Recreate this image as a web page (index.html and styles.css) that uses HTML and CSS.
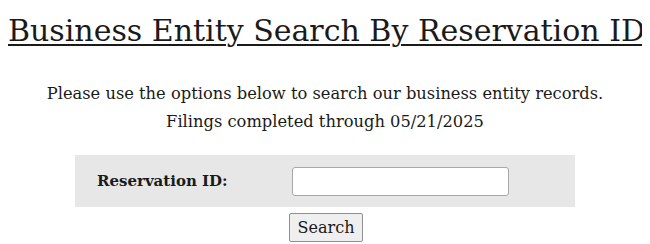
FILE: index.html
```html
<!DOCTYPE html>
<html lang="en">
<head>
<meta charset="utf-8">
<title>Business Entity Search By Reservation ID</title>
<link rel="stylesheet" href="styles.css">
</head>
<body>
<h1 class="title">Business Entity Search By Reservation ID</h1>
<p class="intro">Please use the options below to search our business entity records.<br>Filings completed through 05/21/2025</p>
<form class="search-form">
  <div class="field-row">
    <label class="field-label" for="resid">Reservation ID:</label>
    <input class="field-input" id="resid" type="text">
  </div>
  <div class="actions">
    <button class="search-btn" type="button">Search</button>
  </div>
</form>
</body>
</html>
```

FILE: styles.css
```css
body {
  margin: 8px;
  font-family: "DejaVu Serif", serif;
  color: #1a1a1a;
  background: #fff;
}
.title {
  margin: 3px 0 0;
  font-size: 30px;
  letter-spacing: 0;
  line-height: 40px;
  font-weight: normal;
  white-space: nowrap;
  text-decoration: underline;
  text-decoration-thickness: 2px;
  text-underline-offset: 3px;
}
.intro {
  margin: 29px 0 0;
  font-size: 16.3px;
  line-height: 28px;
  text-align: center;
}
.search-form {
  margin-top: 19px;
}
.field-row {
  width: 500px;
  height: 52px;
  margin: 0 auto;
  background: #e7e7e7;
  display: grid;
  grid-template-columns: 217px 217px;
  align-items: center;
}
.field-label {
  padding-left: 22px;
  font-weight: bold;
  font-size: 15px;
}
.field-input {
  box-sizing: border-box;
  width: 217px;
  height: 29px;
  border: 1px solid #a8a8a8;
  border-radius: 3px;
  background: #fff;
  margin: 0;
}
.actions {
  display: flex;
  justify-content: center;
  margin-top: 6px;
  padding-left: 2px;
}
.search-btn {
  box-sizing: border-box;
  width: 74px;
  height: 29px;
  font-family: "DejaVu Serif", serif;
  font-size: 16px;
  color: #1a1a1a;
  background: #efefef;
  border: 1px solid #8f8f8f;
  border-radius: 2px;
  padding: 0;
}
```
